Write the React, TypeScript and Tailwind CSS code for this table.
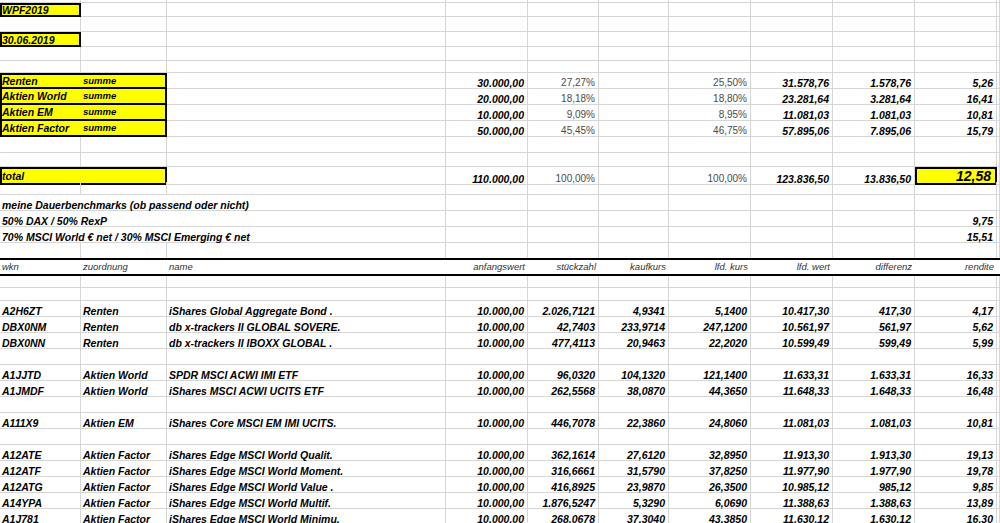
import React from "react";

type Sty = "b" | "pct" | "hdr" | "big";
type Cell = {
  t?: string;
  sub?: string;
  span?: 2 | 3;
  r?: boolean;
  s?: Sty;
  box?: "full" | "next";
};
type H = 3 | 12 | 13 | 14 | 15 | 16 | 18;
type Row = { h: H; cells: Cell[]; hdr?: boolean; nb?: boolean };

const HCLS: Record<H, string> = {
  3: "h-[3px]",
  12: "h-[12px]",
  13: "h-[13px]",
  14: "h-[14px]",
  15: "h-[15px]",
  16: "h-4",
  18: "h-[18px]",
};

const STY: Record<Sty, string> = {
  b: "font-bold italic text-[10.5px] leading-[10px] text-black",
  pct: "text-[10px] leading-[10px] text-[#4a4a4a]",
  hdr: "italic text-[9.5px] leading-[10px] text-[#333333]",
  big: "font-bold italic text-[14px] leading-[14px] text-black",
};

const E = (): Cell => ({});
const empties = (n: number): Cell[] => Array.from({ length: n }, E);
const blank = (h: H, nb?: boolean): Row => ({ h, cells: empties(11), nb });

const R = (t: string, s: Sty = "b"): Cell => ({ t, r: true, s });

const summary = (
  label: string,
  d: string,
  e: string,
  g: string,
  hh: string,
  i: string,
  j: string,
  first: boolean
): Row => ({
  h: 16,
  cells: [
    { t: label, sub: "summe", span: 2, s: "b", box: first ? "full" : "next" },
    E(),
    R(d),
    R(e, "pct"),
    E(),
    R(g, "pct"),
    R(hh),
    R(i),
    R(j),
    E(),
  ],
});

const data = (
  wkn: string,
  zu: string,
  name: string,
  nums: string[]
): Row => ({
  h: 16,
  cells: [
    { t: wkn, s: "b" },
    { t: zu, s: "b" },
    { t: name, s: "b" },
    ...nums.map((n) => R(n)),
    E(),
  ],
});

const rows: Row[] = [
  blank(3),
  { h: 14, cells: [{ t: "WPF2019", s: "b", box: "full" }, ...empties(10)] },
  blank(15),
  { h: 15, cells: [{ t: "30.06.2019", s: "b", box: "full" }, ...empties(10)] },
  blank(14),
  blank(12),
  summary("Renten", "30.000,00", "27,27%", "25,50%", "31.578,76", "1.578,76", "5,26", true),
  summary("Aktien World", "20.000,00", "18,18%", "18,80%", "23.281,64", "3.281,64", "16,41", false),
  summary("Aktien EM", "10.000,00", "9,09%", "8,95%", "11.081,03", "1.081,03", "10,81", false),
  summary("Aktien Factor", "50.000,00", "45,45%", "46,75%", "57.895,06", "7.895,06", "15,79", false),
  blank(16),
  blank(14),
  {
    h: 15,
    cells: [
      { t: "total", span: 2, s: "b", box: "full" },
      E(),
      R("110.000,00"),
      R("100,00%", "pct"),
      E(),
      R("100,00%", "pct"),
      R("123.836,50"),
      R("13.836,50"),
      { t: "12,58", r: true, s: "big", box: "full" },
      E(),
    ],
  },
  blank(13),
  {
    h: 16,
    cells: [
      { t: "meine Dauerbenchmarks (ob passend oder nicht)", span: 3, s: "b" },
      ...empties(8),
    ],
  },
  {
    h: 16,
    cells: [{ t: "50% DAX / 50% RexP", span: 3, s: "b" }, ...empties(6), R("9,75"), E()],
  },
  {
    h: 16,
    cells: [
      { t: "70% MSCI World € net / 30% MSCI Emerging € net", span: 3, s: "b" },
      ...empties(6),
      R("15,51"),
      E(),
    ],
  },
  blank(15, true),
  {
    h: 18,
    hdr: true,
    cells: [
      { t: "wkn", s: "hdr" },
      { t: "zuordnung", s: "hdr" },
      { t: "name", s: "hdr" },
      R("anfangswert", "hdr"),
      R("stückzahl", "hdr"),
      R("kaufkurs", "hdr"),
      R("lfd. kurs", "hdr"),
      R("lfd. wert", "hdr"),
      R("differenz", "hdr"),
      R("rendite", "hdr"),
      E(),
    ],
  },
  blank(12),
  blank(13),
  data("A2H6ZT", "Renten", "iShares Global Aggregate Bond .", ["10.000,00", "2.026,7121", "4,9341", "5,1400", "10.417,30", "417,30", "4,17"]),
  data("DBX0NM", "Renten", "db x-trackers II GLOBAL SOVERE.", ["10.000,00", "42,7403", "233,9714", "247,1200", "10.561,97", "561,97", "5,62"]),
  data("DBX0NN", "Renten", "db x-trackers II IBOXX GLOBAL .", ["10.000,00", "477,4113", "20,9463", "22,2020", "10.599,49", "599,49", "5,99"]),
  blank(16),
  data("A1JJTD", "Aktien World", "SPDR MSCI ACWI IMI ETF", ["10.000,00", "96,0320", "104,1320", "121,1400", "11.633,31", "1.633,31", "16,33"]),
  data("A1JMDF", "Aktien World", "iShares MSCI ACWI UCITS ETF", ["10.000,00", "262,5568", "38,0870", "44,3650", "11.648,33", "1.648,33", "16,48"]),
  blank(16),
  data("A111X9", "Aktien EM", "iShares Core MSCI EM IMI UCITS.", ["10.000,00", "446,7078", "22,3860", "24,8060", "11.081,03", "1.081,03", "10,81"]),
  blank(16),
  data("A12ATE", "Aktien Factor", "iShares Edge MSCI World Qualit.", ["10.000,00", "362,1614", "27,6120", "32,8950", "11.913,30", "1.913,30", "19,13"]),
  data("A12ATF", "Aktien Factor", "iShares Edge MSCI World Moment.", ["10.000,00", "316,6661", "31,5790", "37,8250", "11.977,90", "1.977,90", "19,78"]),
  data("A12ATG", "Aktien Factor", "iShares Edge MSCI World Value .", ["10.000,00", "416,8925", "23,9870", "26,3500", "10.985,12", "985,12", "9,85"]),
  data("A14YPA", "Aktien Factor", "iShares Edge MSCI World Multif.", ["10.000,00", "1.876,5247", "5,3290", "6,0690", "11.388,63", "1.388,63", "13,89"]),
  data("A1J781", "Aktien Factor", "iShares Edge MSCI World Minimu.", ["10.000,00", "268,0678", "37,3040", "43,3850", "11.630,12", "1.630,12", "16,30"]),
];

function CellView({ c, hdr, nb }: { c: Cell; hdr?: boolean; nb?: boolean }) {
  const parts: string[] = ["flex whitespace-nowrap min-w-0"];
  if (c.span === 2) parts.push("col-span-2");
  if (c.span === 3) parts.push("col-span-3");
  if (c.box === "full") {
    parts.push("items-center bg-[#ffff00] border-2 border-black");
  } else if (c.box === "next") {
    parts.push("items-center bg-[#ffff00] border-2 border-t-0 border-black");
  } else if (!hdr) {
    parts.push(
      nb
        ? "items-end border-r border-[#d6d6d6]"
        : "items-end border-r border-b border-[#d6d6d6]"
    );
  } else {
    parts.push("items-center");
  }
  if (c.r) parts.push(c.box ? "justify-end pr-[4px]" : "justify-end pr-[3px]");
  else parts.push(c.box ? "pl-0" : "pl-[2px]");
  if (c.s) parts.push(STY[c.s]);
  return (
    <div className={parts.join(" ")}>
      {c.sub ? (
        <>
          <span className="w-[81px] shrink-0">{c.t}</span>
          <span className="font-bold italic text-[9.5px] leading-[10px]">{c.sub}</span>
        </>
      ) : (
        c.t
      )}
    </div>
  );
}

export default function App() {
  return (
    <div
      className="w-[1000px] h-[523px] overflow-hidden bg-white"
      style={{ fontFamily: '"Liberation Sans", Arial, sans-serif' }}
    >
      {rows.map((row, ri) => (
        <div
          key={ri}
          className={
            "grid grid-cols-[81px_86px_279px_82px_71px_70px_82px_82px_82px_82px_1fr] " +
            HCLS[row.h] +
            (row.hdr ? " border-y-2 border-black" : "")
          }
        >
          {row.cells.map((c, ci) => (
            <CellView key={ci} c={c} hdr={row.hdr} nb={row.nb} />
          ))}
        </div>
      ))}
    </div>
  );
}
